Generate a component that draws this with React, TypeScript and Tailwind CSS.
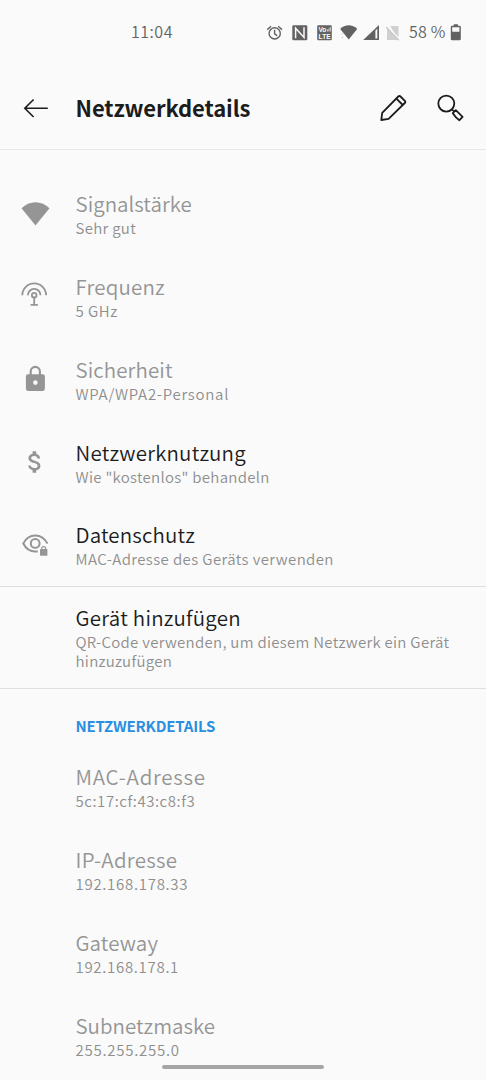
import type { ReactNode } from "react";

type NetworkRow = {
  title: string;
  summary: string;
  titleClass: string;
  summaryClass: string;
  icon?: ReactNode;
};

// Row icons share the 76x83 leading area of a row
function RowIcon({ children }: { children: ReactNode }) {
  return (
    <svg viewBox="0 0 76 83" className="h-[83px] w-[76px] shrink-0 text-[#959595]" fill="none" stroke="none">
      {children}
    </svg>
  );
}

const signalIcon = (
  <RowIcon>
    <path d="M21.5 37.3C29.3 29.3 41.7 29.3 49.5 37.3L35.5 54.5Z" fill="currentColor" />
  </RowIcon>
);

const frequencyIcon = (
  <RowIcon>
    <g stroke="currentColor" strokeWidth="1.8">
      <path d="M22.3 41.2a11.9 11.9 0 0 1 23.8 0" />
      <path d="M27.9 41.2a6.3 6.3 0 0 1 12.6 0" />
      <circle cx="34.2" cy="41.2" r="2.3" />
      <path d="M34.2 43.5v7.3M30.6 50.9h7.2" />
    </g>
  </RowIcon>
);

const lockIcon = (
  <RowIcon>
    <path d="M30.7 38.5v-4a4.6 4.6 0 0 1 9.2 0v4" stroke="currentColor" strokeWidth="2.1" />
    <path
      fillRule="evenodd"
      fill="currentColor"
      d="M28 37.3h14.8a2.1 2.1 0 0 1 2.1 2.1v12.4a2.1 2.1 0 0 1-2.1 2.1H28a2.1 2.1 0 0 1-2.1-2.1V39.4a2.1 2.1 0 0 1 2.1-2.1ZM35.4 43.3a2.3 2.3 0 1 0 0 4.6a2.3 2.3 0 0 0 0-4.6Z"
    />
  </RowIcon>
);

const usageIcon = (
  <RowIcon>
    <path
      transform="translate(20.6 27.6) scale(1.2)"
      fill="currentColor"
      d="M11.8 10.9c-2.27-.59-3-1.2-3-2.15 0-1.09 1.01-1.85 2.7-1.85 1.78 0 2.44.85 2.5 2.1h2.21c-.07-1.72-1.12-3.3-3.21-3.81V3h-3v2.16c-1.94.42-3.5 1.68-3.5 3.61 0 2.31 1.91 3.46 4.7 4.13 2.5.6 3 1.48 3 2.41 0 .69-.49 1.79-2.7 1.79-2.06 0-2.87-.92-2.98-2.1h-2.2c.12 2.19 1.76 3.42 3.68 3.83V21h3v-2.15c1.95-.37 3.5-1.5 3.5-3.55 0-2.84-2.43-3.81-4.7-4.4z"
    />
  </RowIcon>
);

const privacyIcon = (
  <RowIcon>
    <g stroke="currentColor" strokeWidth="2">
      <path d="M47.5 41.6C44.8 36.5 40.4 33.5 35.3 33.5C30 33.5 25.8 36.5 23.3 41.5C25.8 46.5 30 49.6 35.3 49.6H37.8" />
      <circle cx="35.2" cy="41.4" r="4.4" />
      <path d="M41.7 47.8v-1.2a2 2 0 0 1 4 0v1.2" strokeWidth="1.2" />
    </g>
    <rect x="40" y="47.1" width="7.4" height="6.6" rx="0.7" fill="currentColor" />
  </RowIcon>
);

const rows: NetworkRow[] = [
  { title: "Signalstärke", summary: "Sehr gut", titleClass: "text-[#959595] tracking-[0.02px]", summaryClass: "tracking-[0.3px]", icon: signalIcon },
  { title: "Frequenz", summary: "5 GHz", titleClass: "text-[#959595] tracking-[0.2px]", summaryClass: "tracking-[0.5px]", icon: frequencyIcon },
  { title: "Sicherheit", summary: "WPA/WPA2-Personal", titleClass: "text-[#959595] tracking-[0.1px]", summaryClass: "tracking-[0.74px]", icon: lockIcon },
  { title: "Netzwerknutzung", summary: 'Wie "kostenlos" behandeln', titleClass: "text-[#1c1c1c] tracking-[0.22px]", summaryClass: "tracking-[0.3px]", icon: usageIcon },
  { title: "Datenschutz", summary: "MAC-Adresse des Geräts verwenden", titleClass: "text-[#1c1c1c] tracking-[0.15px]", summaryClass: "tracking-[0.4px]", icon: privacyIcon },
];

const details: NetworkRow[] = [
  { title: "MAC-Adresse", summary: "5c:17:cf:43:c8:f3", titleClass: "text-[#959595] tracking-[0.75px]", summaryClass: "tracking-[0.57px]" },
  { title: "IP-Adresse", summary: "192.168.178.33", titleClass: "text-[#959595] tracking-[0.28px]", summaryClass: "tracking-[0.72px]" },
  { title: "Gateway", summary: "192.168.178.1", titleClass: "text-[#959595] tracking-[0.1px]", summaryClass: "tracking-[0.7px]" },
  { title: "Subnetzmaske", summary: "255.255.255.0", titleClass: "text-[#959595]", summaryClass: "tracking-[0.75px]" },
];

function Row({ title, summary, titleClass, summaryClass, icon }: NetworkRow) {
  return (
    <div className="flex h-[82.85px] shrink-0">
      {icon ?? <div className="w-[76px] shrink-0" />}
      <div className="-ml-[0.5px] flex flex-col pt-[18px] whitespace-nowrap">
        <span className={`text-[20.5px] leading-[28px] font-[350] ${titleClass}`}>{title}</span>
        <span className={`mt-px text-[15px] leading-[19px] font-[350] text-[#8e8e8e] ${summaryClass}`}>{summary}</span>
      </div>
    </div>
  );
}

function StatusBar() {
  return (
    <div className="flex h-[67px] shrink-0 items-start pt-[22px] text-[#626262]">
      <span className="-mt-px ml-[131px] w-[133px] text-[16px] leading-5 font-[350] tracking-[0.5px]">11:04</span>
      <svg viewBox="264 22 140 20" className="h-5 w-[140px] shrink-0" fill="none">
        <g stroke="currentColor" strokeWidth="1.4">
          <circle cx="274.7" cy="33.4" r="5.6" />
          <path d="M274.6 29.8v4l2.6 1.8M267.3 29.6l3.8-3.3M282 29.6l-3.8-3.3" />
        </g>
        <rect x="292.3" y="25.2" width="15" height="15" rx="1.2" fill="currentColor" />
        <path d="M295.6 38.2V28.2L304 37.4V27.2" stroke="#fafafa" strokeWidth="1.5" />
        <rect x="317.2" y="25.2" width="14.6" height="15" rx="1.2" fill="currentColor" />
        <g className="font-['Liberation_Sans',sans-serif]" fontWeight="700" fill="#fafafa">
          <text x="318.4" y="31.8" fontSize="7" textLength="8" lengthAdjust="spacingAndGlyphs">Vo</text>
          <text x="318.6" y="39" fontSize="8" textLength="12" lengthAdjust="spacingAndGlyphs">LTE</text>
        </g>
        <path d="M327.4 31.5v-2M328.9 31.5v-3M330.3 31.5v-4.5" stroke="#fafafa" strokeWidth="0.8" />
        <path d="M340.2 28.9C345 24 352.4 24 357.2 28.9L348.7 39.4Z" fill="currentColor" />
        <path d="M341.2 34.2l1.1-1.3l1.1 1.3ZM341.2 37l1.1 1.3l1.1-1.3Z" fill="#c4c4c4" />
        <path d="M363.2 40L379 25V40Z" fill="currentColor" />
        <path d="M375.4 30.6L377.3 28.8V38.6H375.4Z" fill="#fafafa" />
        <path d="M390.2 26h8.3v13.2L387 27.9V40h11.5" fill="#d0d0d0" />
        <path d="M386.6 26.4L399.4 39.8" stroke="#fafafa" strokeWidth="2.4" />
        <path d="M386.2 27.2L398.9 40.4" stroke="#bdbdbd" strokeWidth="1.1" />
      </svg>
      <span className="-mt-px ml-[5px] w-[41px] text-[16px] leading-5 font-[350] tracking-[0.2px] whitespace-nowrap">58 %</span>
      <svg viewBox="450 22 12 20" className="h-5 w-3 shrink-0">
        <path
          fill="currentColor"
          fillRule="evenodd"
          d="M453.7 24.2h4.2v1.5h1.6a1.3 1.3 0 0 1 1.3 1.3v11.9a1.3 1.3 0 0 1-1.3 1.3h-7.4a1.3 1.3 0 0 1-1.3-1.3V27a1.3 1.3 0 0 1 1.3-1.3h1.6ZM452.2 27.2v4.6h7.2v-4.6Z"
        />
      </svg>
    </div>
  );
}

function AppBar() {
  return (
    <header className="flex h-[83px] shrink-0 items-center border-b border-[#e8e8e8] text-[#1c1c1c]">
      <svg viewBox="0 84 76 48" className="h-12 w-[76px] shrink-0" fill="none" stroke="currentColor" strokeWidth="1.6">
        <path d="M33.6 99.5L24.8 108.3L33.6 117M24.8 108.3H47.8" />
      </svg>
      <h1 className="-mt-[3px] -ml-[0.5px] w-[292.5px] text-[22px] leading-[30px] font-bold tracking-[-0.1px]">Netzwerkdetails</h1>
      <svg viewBox="368 84 118 48" className="h-12 w-[118px] shrink-0" fill="none" stroke="currentColor" strokeWidth="1.8" strokeLinejoin="round">
        <path d="M381.3 120L382.2 112.8L398.3 96.5Q399.4 95.4 400.5 96.5L404.8 100.8Q405.9 101.9 404.8 103L388.6 118.8Z" />
        <path d="M396.4 98.6L402.8 105" />
        <circle cx="446.3" cy="103.6" r="8" />
        <path d="M451.9 109.4L454.2 111.6M452.8 113.2L455.8 110.2L462.6 116.8L459.4 120.2Q455.6 117.6 452.8 113.2Z" />
      </svg>
    </header>
  );
}

export default function App() {
  return (
    <div className="relative flex h-[1080px] w-[486px] flex-col overflow-hidden bg-[#fafafa] font-['Noto_Sans_CJK_SC','Noto_Sans',sans-serif]">
      <StatusBar />
      <AppBar />
      <main className="flex flex-col">
        <section className="h-[437px] border-b border-[#dedede] pt-[21px]">
          {rows.map((row) => (
            <Row key={row.title} {...row} />
          ))}
        </section>
        <section className="h-[102px] border-b border-[#dedede] pt-[16px] pl-[75.5px] whitespace-nowrap">
          <div className="text-[20.5px] leading-[28px] font-[350] tracking-[0.25px] text-[#1c1c1c]">Gerät hinzufügen</div>
          <p className="mt-px text-[15px] leading-[19px] font-[350] tracking-[0.29px] text-[#8e8e8e]">
            QR-Code verwenden, um diesem Netzwerk ein Gerät
            <br />
            hinzuzufügen
          </p>
        </section>
        <section>
          <h2 className="h-[55px] pt-[27px] pl-[75.5px] text-[15px] leading-5 font-bold tracking-[-0.18px] text-[#2a8fe0]">NETZWERKDETAILS</h2>
          {details.map((row) => (
            <Row key={row.title} {...row} />
          ))}
        </section>
      </main>
      <div className="absolute top-[1065px] left-[162px] h-1 w-[162px] rounded-full bg-[#a5a5a5]" />
    </div>
  );
}
